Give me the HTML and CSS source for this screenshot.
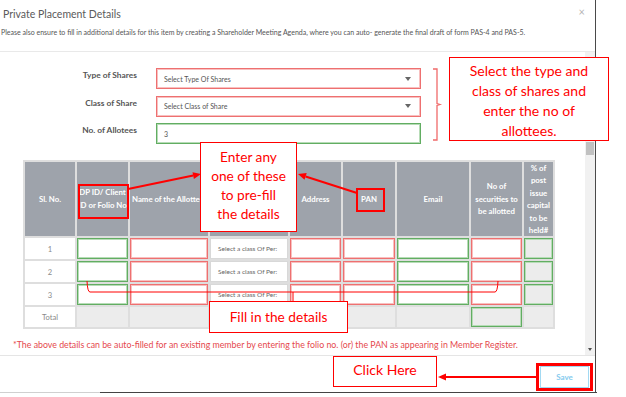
FILE: index.html
```html
<!DOCTYPE html>
<html lang="en">
<head>
<meta charset="utf-8">
<title>Private Placement Details</title>
<link rel="stylesheet" href="styles.css">
</head>
<body>
<div class="modal">
  <div class="modal-header">
    <div class="title-row">
      <h4 class="title">Private Placement Details</h4>
      <span class="close">×</span>
    </div>
    <p class="subtitle">Please also ensure to fill in additional details for this item by creating a Shareholder Meeting Agenda, where you can auto- generate the final draft of form PAS-4 and PAS-5.</p>
  </div>
  <div class="modal-body">
    <div class="body-content">
      <div class="form">
        <label class="lbl">Type of Shares</label>
        <div class="select err"><span>Select Type Of Shares</span><i class="caret"></i></div>
        <label class="lbl">Class of Share</label>
        <div class="select err"><span>Select Class of Share</span><i class="caret"></i></div>
        <label class="lbl">No. of Allotees</label>
        <div class="select ok"><span>3</span></div>
      </div>

      <div class="grid">
        <div class="th"><span>Sl. No.</span></div>
        <div class="th clip"><span>DP ID/ Client</span><span>ID or Folio No</span></div>
        <div class="th clip start"><span>Name of the Allottee</span></div>
        <div class="th"></div>
        <div class="th"><span>Address</span></div>
        <div class="th"><span>PAN</span></div>
        <div class="th"><span>Email</span></div>
        <div class="th wrap">No of securities to be allotted</div>
        <div class="th wrap">% of post issue capital to be held#</div>

        <div class="td num">1</div>
        <div class="td ok"></div>
        <div class="td err"></div>
        <div class="td sel">Select a class Of Per:</div>
        <div class="td err"></div>
        <div class="td err"></div>
        <div class="td ok"></div>
        <div class="td err"></div>
        <div class="td ok grey"></div>

        <div class="td num">2</div>
        <div class="td ok"></div>
        <div class="td err"></div>
        <div class="td sel">Select a class Of Per:</div>
        <div class="td err"></div>
        <div class="td err"></div>
        <div class="td ok"></div>
        <div class="td err"></div>
        <div class="td ok grey"></div>

        <div class="td num">3</div>
        <div class="td ok"></div>
        <div class="td err"></div>
        <div class="td sel">Select a class Of Per:</div>
        <div class="td err"></div>
        <div class="td err"></div>
        <div class="td ok"></div>
        <div class="td err"></div>
        <div class="td ok grey"></div>

        <div class="td num">Total</div>
        <div class="td grey"></div>
        <div class="td grey"></div>
        <div class="td grey"></div>
        <div class="td grey"></div>
        <div class="td grey"></div>
        <div class="td grey"></div>
        <div class="td ok grey"></div>
        <div class="td grey"></div>
      </div>

      <p class="note">*The above details can be auto-filled for an existing member by entering the folio no. (or) the PAN as appearing in Member Register.</p>
    </div>
    <div class="scrollbar">
      <div class="thumb"></div>
      <i class="arrow-down"></i>
    </div>
  </div>
  <div class="modal-footer">
    <button class="save" type="button">Save</button>
  </div>
  <div class="modal-edge"></div>
</div>

<div class="callout callout-select">Select the type and<br>class of shares and<br>enter the no of<br>allottees.</div>
<div class="callout callout-enter">Enter any<br>one of these<br>to pre-fill<br>the details</div>
<div class="callout callout-fill">Fill in the details</div>
<div class="callout callout-click">Click Here</div>
<div class="hl hl-dp"></div>
<div class="hl hl-pan"></div>
<div class="hl hl-save"></div>

<svg class="overlay" width="626" height="397" viewBox="0 0 626 397" aria-hidden="true">
  <path d="M433 69 H437 V103.5 L440 104.5 L437 105.5 V140 H433" fill="none" stroke="#f06a6a" stroke-width="1.3"/>
  <line x1="128" y1="189" x2="193.2" y2="175.6" stroke="#f00" stroke-width="2"/>
  <polygon points="201,174 193.9,179 192.5,172.2" fill="#f00"/>
  <line x1="357" y1="193" x2="305.6" y2="176.5" stroke="#f00" stroke-width="2"/>
  <polygon points="298,174 306.7,173.1 304.5,179.8" fill="#f00"/>
  <path d="M87 281 Q87.5 292 90 292 H495 Q497.5 292 498 281" fill="none" stroke="#f00" stroke-width="1"/>
  <path d="M293 292 V301" fill="none" stroke="#f00" stroke-width="1"/>
  <line x1="536" y1="377" x2="445" y2="377" stroke="#f00" stroke-width="2"/>
  <polygon points="438,377 446,373.5 446,380.5" fill="#f00"/>
</svg>
</body>
</html>
```

FILE: styles.css
```css
* { box-sizing: border-box; }

html, body {
  margin: 0;
  padding: 0;
  background: #fff;
  font-family: "Lato", "Open Sans", sans-serif;
}

body {
  width: 626px;
  height: 397px;
  overflow: hidden;
  position: relative;
}

.modal {
  width: 596px;
  border-right: 1px solid #4a4a4a;
  display: flex;
  flex-direction: column;
  background: #fff;
}

/* header */
.modal-header {
  height: 52px;
  border-bottom: 1px solid #e9e9e9;
  padding: 7px 10px 0 3px;
}

.title-row {
  display: flex;
  justify-content: space-between;
  align-items: center;
  height: 14px;
}

.title {
  margin: 0;
  font-size: 10.5px;
  font-weight: 400;
  color: #5a5a5a;
  line-height: 14px;
}

.close {
  color: #b5b5b5;
  font-size: 11px;
  line-height: 10px;
  margin-top: -4px;
}

.subtitle {
  margin: 6px 0 0 -2px;
  font-size: 7px;
  line-height: 10px;
  color: #555;
  white-space: nowrap;
}

/* body */
.modal-body {
  height: 303px;
  display: flex;
}

.body-content {
  flex: 1;
  padding-top: 16px;
}

.form {
  display: grid;
  grid-template-columns: 137px 265px;
  grid-auto-rows: 21px;
  column-gap: 19px;
  row-gap: 6.5px;
}

.lbl {
  justify-self: end;
  align-self: start;
  font-size: 8.4px;
  font-weight: 700;
  color: #555;
  line-height: 14px;
}

.select {
  display: flex;
  align-items: center;
  justify-content: space-between;
  padding: 0 9px 0 7px;
  font-size: 7px;
  color: #555;
  background: #fff;
}

.err {
  border: 1px solid #ee7070;
  box-shadow: inset 0 0 0 1px #f8c0c0;
}

.ok {
  border: 1px solid #62ad62;
  box-shadow: inset 0 0 0 1px #b7dcb7;
}

.caret {
  width: 0;
  height: 0;
  border-left: 3.5px solid transparent;
  border-right: 3.5px solid transparent;
  border-top: 4px solid #666;
}

/* table */
.grid {
  margin: 16px 0 0 23px;
  width: 532px;
  display: grid;
  grid-template-columns: 50px 51px 78px 78px 51px 52px 72px 51px 29px;
  grid-template-rows: 74px 21px 21px 21px 20px;
  gap: 2px;
  padding: 2px;
  background: #dedede;
}

.th {
  background: #9ea3ab;
  color: #fff;
  font-weight: 700;
  font-size: 7.8px;
  line-height: 13px;
  display: flex;
  flex-direction: column;
  align-items: center;
  justify-content: center;
  text-align: center;
  overflow: hidden;
}

.th span { white-space: nowrap; }

.th.start { align-items: flex-start; padding-left: 2px; }

.th.wrap {
  display: flex;
  align-items: center;
  padding: 0 2px;
  line-height: 12.5px;
}

.td {
  background: #fff;
}

.td.num {
  display: flex;
  align-items: center;
  justify-content: center;
  font-size: 7.6px;
  color: #8a8a8a;
}

.td.sel {
  border: 1px solid #d8d8d8;
  display: flex;
  align-items: center;
  padding-left: 7px;
  font-size: 6.5px;
  color: #666;
  white-space: nowrap;
  overflow: hidden;
}

.td.grey { background: #ececec; }

.note {
  margin: 10px 0 0 13px;
  font-size: 8.8px;
  line-height: 11px;
  color: #e5484d;
  white-space: nowrap;
}

/* scrollbar */
.scrollbar {
  width: 10px;
  background: #f1f1f1;
  display: flex;
  flex-direction: column;
  align-items: center;
}

.thumb {
  margin-top: 90px;
  width: 8px;
  height: 13px;
  background: #c1c1c1;
}

.arrow-down {
  margin-top: auto;
  margin-bottom: 4px;
  width: 0;
  height: 0;
  border-left: 2.5px solid transparent;
  border-right: 2.5px solid transparent;
  border-top: 3px solid #505050;
}

/* footer */
.modal-footer {
  height: 37px;
  border-top: 1px solid #e5e5e5;
  display: flex;
  justify-content: flex-end;
  align-items: flex-start;
  padding: 10px 6px 0 0;
}

.save {
  width: 49px;
  height: 22px;
  border: 1px solid #a2d9f2;
  background: #fff;
  color: #86cbee;
  font-family: "Lato", sans-serif;
  font-size: 8px;
  font-weight: 700;
  padding: 0;
}

.modal-edge {
  height: 1px;
  width: 597px;
  background: linear-gradient(to right, #d0d0d0 0, #d0d0d0 100px, #444 100px);
}

/* annotations (overlay) */
.callout {
  position: absolute;
  background: #fff;
  border: 1px solid #f00;
  color: #f00;
  font-family: "Lato", sans-serif;
  text-align: center;
}

.callout-select {
  left: 449px;
  top: 57px;
  width: 160px;
  height: 84px;
  font-size: 14px;
  line-height: 20px;
  padding-top: 3px;
}

.callout-enter {
  left: 200px;
  top: 142px;
  width: 97px;
  height: 90px;
  font-size: 13.7px;
  line-height: 19px;
  padding-top: 4px;
}

.callout-fill {
  left: 209px;
  top: 301px;
  width: 139px;
  height: 32px;
  font-size: 13.7px;
  line-height: 29px;
}

.callout-click {
  left: 333px;
  top: 356px;
  width: 104px;
  height: 31px;
  font-size: 14px;
  line-height: 26px;
}

.hl {
  position: absolute;
  border: 2px solid #f00;
}

.hl-dp { left: 78px; top: 184px; width: 51px; height: 35px; }
.hl-pan { left: 356px; top: 188px; width: 29px; height: 24px; }
.hl-save { left: 536px; top: 363px; width: 57px; height: 28px; border-width: 3px; }

.overlay {
  position: absolute;
  left: 0;
  top: 0;
  pointer-events: none;
}
```
